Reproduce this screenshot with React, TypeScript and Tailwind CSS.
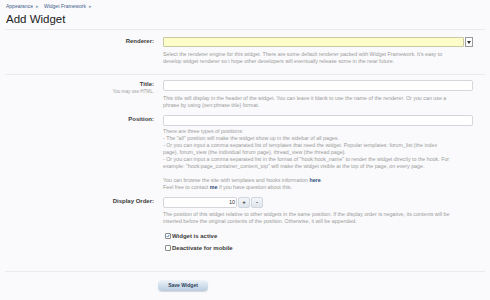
import React from 'react';

const Label: React.FC<{ text: string; hint?: string }> = ({ text, hint }) => (
  <div className="w-[150px] shrink-0 text-right pr-[1px]">
    <div className="text-[6px] font-bold leading-[7px] text-[#3a3a3a] mt-[1px]">{text}</div>
    {hint && <div className="text-[4.6px] leading-[5px] text-[#a0a0a0] mt-[1px]">{hint}</div>}
  </div>
);

const Help: React.FC<{ children: React.ReactNode; className?: string }> = ({ children, className }) => (
  <div className={`text-[5.3px] leading-[7px] text-[#9a9a9a] whitespace-nowrap ${className ?? ''}`}>{children}</div>
);

const Check: React.FC<{ checked?: boolean; label: string }> = ({ checked, label }) => (
  <div className="flex items-center h-[12px] pl-[2px]">
    <span className="w-[6px] h-[6px] rounded-[1px] border border-[#8a8a8a] bg-white flex items-center justify-center">
      {checked && (
        <svg width="6" height="6" viewBox="0 0 6 6">
          <path d="M1 3.2 L2.4 4.6 L5 1.2" stroke="#3566a8" strokeWidth="1.3" fill="none" />
        </svg>
      )}
    </span>
    <span className="ml-[1px] text-[6px] font-bold text-[#3a3a3a]">{label}</span>
  </div>
);

export default function App() {
  return (
    <div className="w-[490px] h-[300px] overflow-hidden bg-[#fafafc] font-['Liberation_Sans',Arial,sans-serif]">
      <div className="px-[6px] pt-[3px]">
        <div className="h-[6px] text-[5px] leading-[6px] text-[#3d5d8a] flex gap-[3px]">
          <span>Appearance</span><span className="text-[#8a9ab0]">▸</span>
          <span className="ml-[2px]">Widget Framework</span><span className="text-[#8a9ab0]">▸</span>
        </div>
        <h1 className="mt-[3px] text-[11.5px] leading-[14px] text-[#222]">Add Widget</h1>
      </div>

      <div className="mx-[5px] mt-[3px] border-t border-[#e8eaf0]">
        {/* Renderer */}
        <div className="flex gap-[8px] pt-[7px]">
          <Label text="Renderer:" />
          <div className="w-[310px]">
            <div className="flex h-[10px]">
              <div className="flex-1 bg-[#fdfdc9] border border-[#c9c9a2] rounded-[1px]" />
              <div className="w-[8px] ml-[1px] bg-white border border-[#9a9a9a] flex items-center justify-center">
                <svg width="4" height="3" viewBox="0 0 4 3"><path d="M0 0 L4 0 L2 3 Z" fill="#333" /></svg>
              </div>
            </div>
            <Help className="mt-[4px] mb-[9px]">
              Select the renderer engine for this widget. There are some default renderer packed with Widget Framework. It's easy to<br />
              develop widget renderer so i hope other developers will eventually release some in the near future.
            </Help>
          </div>
        </div>

        <div className="border-t border-[#e8eaf0]" />

        {/* Title */}
        <div className="flex gap-[8px] pt-[5px]">
          <Label text="Title:" hint="You may use HTML." />
          <div className="w-[310px]">
            <div className="h-[11px] bg-white border border-[#d4d6dc] rounded-[2px]" />
            <Help className="mt-[4px]">
              This title will display in the header of the widget. You can leave it blank to use the name of the renderer. Or you can use a<br />
              phrase by using {'{xen:phrase title}'} format.
            </Help>
          </div>
        </div>

        {/* Position */}
        <div className="flex gap-[8px] pt-[6px]">
          <Label text="Position:" />
          <div className="w-[310px]">
            <div className="h-[11px] bg-white border border-[#d4d6dc] rounded-[2px]" />
            <Help className="mt-[2px]">
              There are three types of positions:<br />
              - The "all" position will make the widget show up in the sidebar of all pages.<br />
              - Or you can input a comma separated list of templates that need the widget. Popular templates: forum_list (the index<br />
              page), forum_view (the individual forum page), thread_view (the thread page).<br />
              - Or you can input a comma separated list in the format of "hook:hook_name" to render the widget directly to the hook. For<br />
              example: "hook:page_container_content_top" will make the widget visible at the top of the page, on every page.<br />
              <br />
              You can browse the site with templates and hooks information <span className="font-bold text-[#2d4a78]">here</span>.<br />
              Feel free to contact <span className="font-bold text-[#2d4a78]">me</span> if you have question about this.
            </Help>
          </div>
        </div>

        {/* Display Order */}
        <div className="flex gap-[8px] pt-[6px]">
          <Label text="Display Order:" />
          <div className="w-[310px]">
            <div className="flex h-[11px] gap-[1px]">
              <div className="w-[74px] bg-white border border-[#d4d6dc] rounded-[2px] text-right pr-[1px] text-[5.5px] leading-[9px] text-[#333]">10</div>
              <div className="w-[12px] rounded-[2px] border border-[#cfd6de] bg-gradient-to-b from-[#f4f6f9] to-[#dfe5ec] text-[6px] font-bold leading-[9px] text-center text-[#333]">+</div>
              <div className="w-[12px] rounded-[2px] border border-[#cfd6de] bg-gradient-to-b from-[#f4f6f9] to-[#dfe5ec] text-[6px] font-bold leading-[9px] text-center text-[#333]">-</div>
            </div>
            <Help className="mt-[3px] mb-[5px]">
              The position of this widget relative to other widgets in the same position. If the display order is negative, its contents will be<br />
              inserted before the original contents of the position. Otherwise, it will be appended.
            </Help>
            <Check checked label="Widget is active" />
            <Check label="Deactivate for mobile" />
          </div>
        </div>

        <div className="mt-[17px] border-t border-[#e8eaf0]" />

        <div className="flex pt-[8px] pl-[153px]">
          <button className="w-[50px] h-[11px] rounded-[4px] bg-gradient-to-b from-[#eef3f8] to-[#b9cde1] shadow-[0_1px_1px_rgba(0,0,0,0.15)] text-[5px] font-bold leading-[11px] text-[#2b3f5c]">
            Save Widget
          </button>
        </div>
      </div>
    </div>
  );
}
